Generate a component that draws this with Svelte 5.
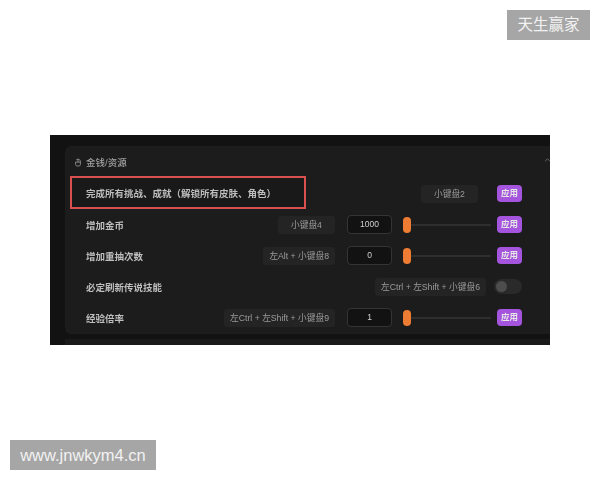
<script lang="ts">
const rows = [
  { label: '完成所有挑战、成就（解锁所有皮肤、角色）', key: '小键盘2', kind: 'button', boxed: true },
  { label: '增加金币', key: '小键盘4', kind: 'slider', value: '1000' },
  { label: '增加重抽次数', key: '左Alt + 小键盘8', kind: 'slider', value: '0' },
  { label: '必定刷新传说技能', key: '左Ctrl + 左Shift + 小键盘6', kind: 'toggle' },
  { label: '经验倍率', key: '左Ctrl + 左Shift + 小键盘9', kind: 'slider', value: '1' }
];
</script>

<div class="page">
  <div class="shot">
    <section class="panel">
      <header class="head">
        <svg class="hand" viewBox="0 0 10 10" width="8" height="9" aria-hidden="true">
          <path d="M2 4.5V7.5C2 8.8 3.2 9.5 5 9.5S8 8.8 8 7.5V4C8 2 6.8.8 5 .8 4 .8 3.2 1.2 2.7 1.9M2 4.5H8M5 .8V4.5" fill="none" stroke="currentColor" stroke-width="1"/>
        </svg>
        <span>金钱/资源</span>
        <svg class="chev" viewBox="0 0 8 5" width="7" height="4" aria-hidden="true">
          <path d="M1 4 4 1 7 4" fill="none" stroke="currentColor" stroke-width="1"/>
        </svg>
      </header>

      {#each rows as row}
        <div class="row">
          <div class="label" class:boxed={row.boxed}>{row.label}</div>
          <div class="key" class:first={row.kind === 'button'}>{row.key}</div>
          {#if row.kind === 'slider'}
            <div class="num">{row.value}</div>
            <div class="slider"><span class="thumb"></span></div>
          {/if}
          {#if row.kind === 'toggle'}
            <div class="toggle"><span class="knob"></span></div>
          {:else}
            <div class="apply">应用</div>
          {/if}
        </div>
      {/each}
    </section>
    <div class="next"></div>
  </div>

  <div class="mark top">天生赢家</div>
  <div class="mark bottom">www.jnwkym4.cn</div>
</div>

<style>
  :global(body) {
    background: #fff;
  }

  .page {
    position: relative;
    width: 600px;
    height: 480px;
    padding: 135px 50px 0;
    box-sizing: border-box;
    overflow: hidden;
    font-family: "Liberation Sans", "Noto Sans CJK SC", sans-serif;
  }

  .shot {
    width: 500px;
    height: 210px;
    padding: 11px 0 0 15px;
    box-sizing: border-box;
    background: #121212;
    overflow: hidden;
    filter: blur(0.6px);
  }

  .panel {
    width: 520px;
    height: 188px;
    padding-top: 6px;
    box-sizing: border-box;
    border-radius: 6px 0 0 6px;
    background: #1c1c1d;
    color: #bebebe;
  }

  .next {
    width: 520px;
    height: 10px;
    margin-top: 5px;
    background: #1a1a1b;
  }

  .head {
    display: flex;
    align-items: center;
    height: 20px;
    margin-bottom: 6px;
    padding-left: 9px;
    font-size: 9.5px;
    font-weight: 500;
    color: #a0a0a0;
  }

  .hand {
    margin-right: 4px;
  }

  .chev {
    margin: -4px 0 0 auto;
    position: relative;
    left: -34px;
    color: #777;
  }

  .row {
    display: flex;
    align-items: center;
    height: 31px;
    width: 457px;
    padding-left: 21px;
    box-sizing: border-box;
  }

  .label {
    flex: none;
    margin-right: auto;
    font-size: 9.5px;
    font-weight: 700;
    white-space: nowrap;
  }

  .label.boxed {
    width: 236px;
    height: 33px;
    margin: 0 auto 3px -16px;
    padding-left: 14px;
    box-sizing: border-box;
    border: 2px solid #d8504f;
    line-height: 31px;
    background: #19191a;
  }

  .key {
    flex: none;
    min-width: 45px;
    height: 18px;
    margin-right: 12px;
    padding: 0 6px;
    border-radius: 3px;
    background: #242425;
    color: #9b9b9b;
    font-size: 8.7px;
    line-height: 18px;
    text-align: center;
    white-space: nowrap;
  }

  .key.first {
    margin-right: 19px;
  }

  .num {
    flex: none;
    width: 45px;
    height: 19px;
    box-sizing: border-box;
    border: 1px solid #343434;
    border-radius: 4px;
    background: #121213;
    color: #cfcfcf;
    font-size: 8.5px;
    line-height: 17px;
    text-align: center;
  }

  .slider {
    flex: none;
    display: flex;
    align-items: center;
    width: 88px;
    height: 2px;
    margin: 0 6px 0 11px;
    background: #2e2e2f;
  }

  .thumb {
    width: 8px;
    height: 16px;
    border-radius: 4px;
    background: #ee7d33;
  }

  .apply {
    flex: none;
    width: 25px;
    height: 17px;
    border-radius: 4px;
    background: #a555dd;
    color: #e6e6e6;
    font-size: 8.5px;
    font-weight: 700;
    line-height: 16px;
    text-align: center;
  }

  .toggle {
    flex: none;
    display: flex;
    align-items: center;
    width: 28px;
    height: 15px;
    margin-left: -4px;
    padding-left: 2px;
    box-sizing: border-box;
    border-radius: 8px;
    background: #2a2a2b;
  }

  .knob {
    width: 11px;
    height: 11px;
    border-radius: 50%;
    background: #4d4d4e;
  }

  .mark {
    position: absolute;
    height: 30px;
    background: #a6a6a6;
    color: #f2f2f2;
    line-height: 30px;
    text-align: center;
  }

  .top {
    top: 10px;
    right: 10px;
    width: 83px;
    font-size: 15.5px;
  }

  .bottom {
    left: 10px;
    bottom: 10px;
    width: 146px;
    font-size: 16.5px;
  }
</style>
